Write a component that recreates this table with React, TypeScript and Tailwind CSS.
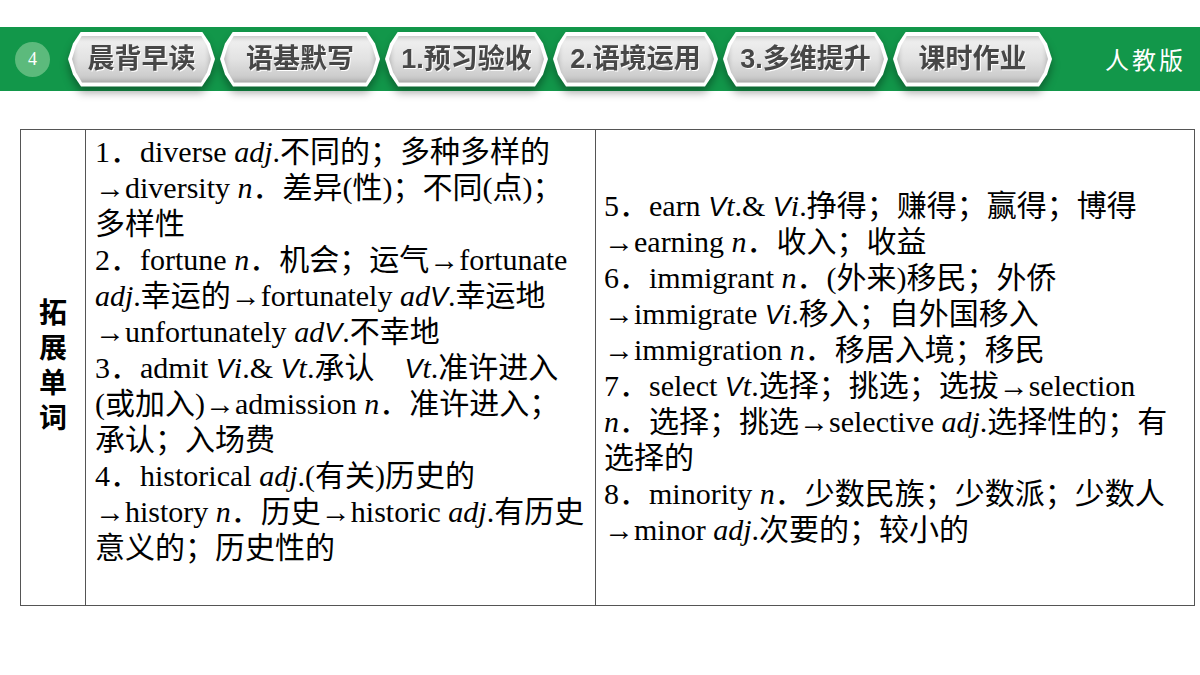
import type { ReactNode } from 'react';

const tabs = [
  { label: '晨背早读', w: 'w-[147px]' },
  { label: '语基默写', w: 'w-[160px]' },
  { label: '1.预习验收', w: 'w-[163px]' },
  { label: '2.语境运用', w: 'w-[165px]' },
  { label: '3.多维提升', w: 'w-[165px]' },
  { label: '课时作业', w: 'w-[159px]' },
];

function I({ children }: { children: ReactNode }) {
  return <i>{children}</i>;
}

// the "v" of vt / vi / adv is drawn in a sans face in the slide
function V() {
  return <span className="font-['Liberation_Sans'] italic text-[27px]">V</span>;
}

function Line({ children }: { children: ReactNode }) {
  return <div className="h-[36px] leading-[36px] whitespace-nowrap">{children}</div>;
}

function Tab({ label, w }: { label: string; w: string }) {
  return (
    <div
      className={`${w} h-[55px] bg-white p-[4px] [clip-path:polygon(0_50%,5px_22%,13px_0,calc(100%_-_13px)_0,calc(100%_-_5px)_22%,100%_50%,calc(100%_-_5px)_78%,calc(100%_-_13px)_100%,13px_100%,5px_78%)]`}
    >
      <div className="h-full w-full flex items-center justify-center bg-gradient-to-b from-[#f2f2f2] via-[#e2e2e2] to-[#c4c4c4] shadow-[inset_0_0_6px_rgba(0,0,0,0.35)] [clip-path:polygon(0_50%,4px_22%,10px_0,calc(100%_-_10px)_0,calc(100%_-_4px)_22%,100%_50%,calc(100%_-_4px)_78%,calc(100%_-_10px)_100%,10px_100%,4px_78%)]">
        <span className="font-['Liberation_Sans','Noto_Sans_CJK_SC',sans-serif] font-bold text-[27px] text-[#474747] [text-shadow:1px_1px_0_#ffffff]">
          {label}
        </span>
      </div>
    </div>
  );
}

export default function App() {
  return (
    <div className="w-[1200px] h-[675px] bg-white overflow-hidden">
      {/* Header bar */}
      <div className="mt-[27px] h-[64px] bg-[#12974a] flex items-center">
        <div className="ml-[15px] w-[35px] h-[35px] rounded-full bg-[#5cba7c] flex items-center justify-center">
          <span className="font-['Liberation_Serif',serif] text-[18px] text-white">4</span>
        </div>
        <div className="ml-[18px] flex gap-[5px] drop-shadow-[0_6px_4px_rgba(0,0,0,0.35)]">
          {tabs.map(t => (
            <Tab key={t.label} label={t.label} w={t.w} />
          ))}
        </div>
        <div className="ml-auto mr-[14px] font-['Noto_Sans_CJK_SC',serif] text-[24px] tracking-[3px] text-white">
          人教版
        </div>
      </div>

      {/* Vocabulary table */}
      <div className="mt-[38px] ml-[20px] w-[1175px] h-[477px] border-[1.5px] border-[#555555] flex font-['Liberation_Serif','Noto_Sans_CJK_SC',serif] text-[30px] text-black">
        <div className="w-[65px] border-r-[1.5px] border-[#555555] flex items-center justify-center">
          <span className="[writing-mode:vertical-rl] tracking-[7px] font-['Noto_Sans_CJK_SC',sans-serif] font-bold text-[28px] leading-[28px]">
            拓展单词
          </span>
        </div>

        <div className="w-[510px] border-r-[1.5px] border-[#555555] pl-[9px] pt-[4px]">
          <Line>1．diverse <I>adj</I>.不同的；多种多样的</Line>
          <Line>→diversity <I>n</I>．差异(性)；不同(点)；</Line>
          <Line>多样性</Line>
          <Line>2．fortune <I>n</I>．机会；运气→fortunate</Line>
          <Line><I>adj</I>.幸运的→fortunately <I>ad</I><V />.幸运地</Line>
          <Line>→unfortunately <I>ad</I><V />.不幸地</Line>
          <Line>3．admit <V /><I>i</I>.&amp; <V /><I>t</I>.承认　<V /><I>t</I>.准许进入</Line>
          <Line>(或加入)→admission <I>n</I>．准许进入；</Line>
          <Line>承认；入场费</Line>
          <Line>4．historical <I>adj</I>.(有关)历史的</Line>
          <Line>→history <I>n</I>．历史→historic <I>adj</I>.有历史</Line>
          <Line>意义的；历史性的</Line>
        </div>

        <div className="flex-1 pl-[8px] flex flex-col justify-center">
          <Line>5．earn <V /><I>t</I>.&amp; <V /><I>i</I>.挣得；赚得；赢得；博得</Line>
          <Line>→earning <I>n</I>．收入；收益</Line>
          <Line>6．immigrant <I>n</I>．(外来)移民；外侨</Line>
          <Line>→immigrate <V /><I>i</I>.移入；自外国移入</Line>
          <Line>→immigration <I>n</I>．移居入境；移民</Line>
          <Line>7．select <V /><I>t</I>.选择；挑选；选拔→selection</Line>
          <Line><I>n</I>．选择；挑选→selective <I>adj</I>.选择性的；有</Line>
          <Line>选择的</Line>
          <Line>8．minority <I>n</I>．少数民族；少数派；少数人</Line>
          <Line>→minor <I>adj</I>.次要的；较小的</Line>
        </div>
      </div>
    </div>
  );
}
